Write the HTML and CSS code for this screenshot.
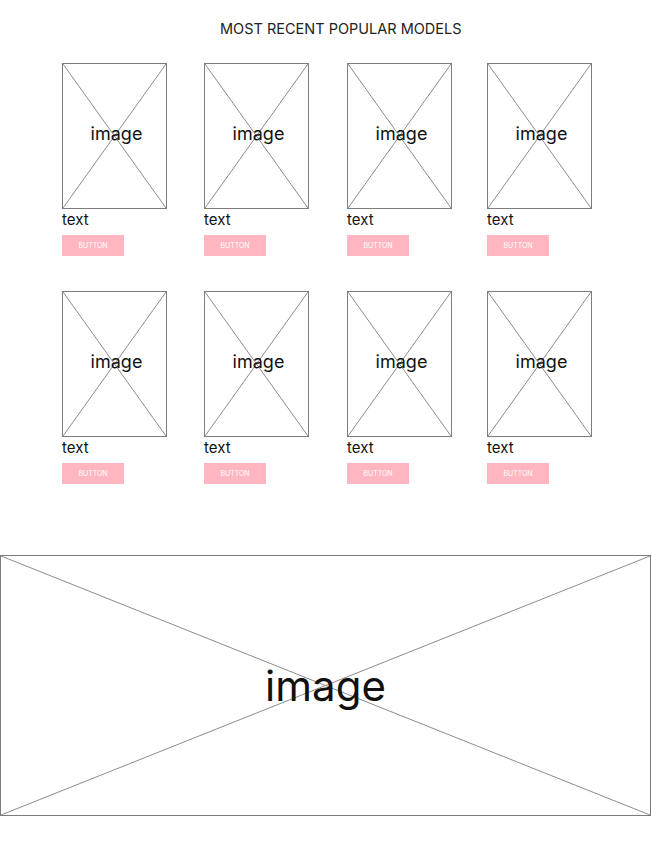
FILE: index.html
```html
<!DOCTYPE html>
<html lang="en">
<head>
    <meta charset="UTF-8">
    <meta name="viewport" content="width=device-width, initial-scale=1.0">
    <title>Most Recent Popular Models</title>
    <link rel="stylesheet" href="styles.css">
</head>
<body>
    <h1 class="title">MOST RECENT POPULAR MODELS</h1>

    <div class="models">
        <div class="card">
            <div class="placeholder">
                <svg class="cross" viewBox="0 0 100 100" preserveAspectRatio="none"><line x1="0" y1="0" x2="100" y2="100"/><line x1="100" y1="0" x2="0" y2="100"/></svg>
                <span class="label">image</span>
            </div>
            <div class="text">text</div>
            <div class="button">BUTTON</div>
        </div>
        <div class="card">
            <div class="placeholder">
                <svg class="cross" viewBox="0 0 100 100" preserveAspectRatio="none"><line x1="0" y1="0" x2="100" y2="100"/><line x1="100" y1="0" x2="0" y2="100"/></svg>
                <span class="label">image</span>
            </div>
            <div class="text">text</div>
            <div class="button">BUTTON</div>
        </div>
        <div class="card">
            <div class="placeholder">
                <svg class="cross" viewBox="0 0 100 100" preserveAspectRatio="none"><line x1="0" y1="0" x2="100" y2="100"/><line x1="100" y1="0" x2="0" y2="100"/></svg>
                <span class="label">image</span>
            </div>
            <div class="text">text</div>
            <div class="button">BUTTON</div>
        </div>
        <div class="card">
            <div class="placeholder">
                <svg class="cross" viewBox="0 0 100 100" preserveAspectRatio="none"><line x1="0" y1="0" x2="100" y2="100"/><line x1="100" y1="0" x2="0" y2="100"/></svg>
                <span class="label">image</span>
            </div>
            <div class="text">text</div>
            <div class="button">BUTTON</div>
        </div>

        <div class="card">
            <div class="placeholder">
                <svg class="cross" viewBox="0 0 100 100" preserveAspectRatio="none"><line x1="0" y1="0" x2="100" y2="100"/><line x1="100" y1="0" x2="0" y2="100"/></svg>
                <span class="label">image</span>
            </div>
            <div class="text">text</div>
            <div class="button">BUTTON</div>
        </div>
        <div class="card">
            <div class="placeholder">
                <svg class="cross" viewBox="0 0 100 100" preserveAspectRatio="none"><line x1="0" y1="0" x2="100" y2="100"/><line x1="100" y1="0" x2="0" y2="100"/></svg>
                <span class="label">image</span>
            </div>
            <div class="text">text</div>
            <div class="button">BUTTON</div>
        </div>
        <div class="card">
            <div class="placeholder">
                <svg class="cross" viewBox="0 0 100 100" preserveAspectRatio="none"><line x1="0" y1="0" x2="100" y2="100"/><line x1="100" y1="0" x2="0" y2="100"/></svg>
                <span class="label">image</span>
            </div>
            <div class="text">text</div>
            <div class="button">BUTTON</div>
        </div>
        <div class="card">
            <div class="placeholder">
                <svg class="cross" viewBox="0 0 100 100" preserveAspectRatio="none"><line x1="0" y1="0" x2="100" y2="100"/><line x1="100" y1="0" x2="0" y2="100"/></svg>
                <span class="label">image</span>
            </div>
            <div class="text">text</div>
            <div class="button">BUTTON</div>
        </div>
    </div>

    <div class="placeholder banner">
        <svg class="cross" viewBox="0 0 100 100" preserveAspectRatio="none"><line x1="0" y1="0" x2="100" y2="100"/><line x1="100" y1="0" x2="0" y2="100"/></svg>
        <span class="label">image</span>
    </div>
</body>
</html>
```

FILE: styles.css
```css
body {
    margin: 0;
    font-family: 'Inter', 'Liberation Sans', sans-serif;
    background-color: #fff;
    color: #000;
}
.title {
    margin: 0;
    padding: 20px 0 0 220px;
    font-size: 14.5px;
    font-weight: 400;
    line-height: 18px;
    color: #222;
}
.models {
    display: grid;
    grid-template-columns: 142px 143px 140px 105px;
    row-gap: 35px;
    padding: 25px 0 0 62px;
}
.card {
    width: 105px;
}
.placeholder {
    position: relative;
    height: 146px;
    border: 1px solid #7d7d7d;
    box-sizing: border-box;
    display: flex;
    justify-content: center;
    align-items: center;
}
.cross {
    position: absolute;
    top: 0;
    left: 0;
    width: 100%;
    height: 100%;
}
.cross line {
    stroke: #8c8c8c;
    stroke-width: 1;
    vector-effect: non-scaling-stroke;
}
.label {
    position: relative;
    font-size: 18px;
    color: #111;
    margin: -6px 0 0 4px;
}
.text {
    font-size: 15px;
    line-height: 16px;
    margin-top: 3px;
    color: #111;
}
.button {
    width: 62px;
    height: 21px;
    margin-top: 7px;
    background-color: #ffb6c1;
    color: #fff;
    font-size: 7px;
    text-align: center;
    line-height: 21px;
}
.banner {
    margin-top: 71px;
    height: 261px;
    width: 651px;
}
.banner .label {
    font-size: 42px;
    margin: 0;
}
```
